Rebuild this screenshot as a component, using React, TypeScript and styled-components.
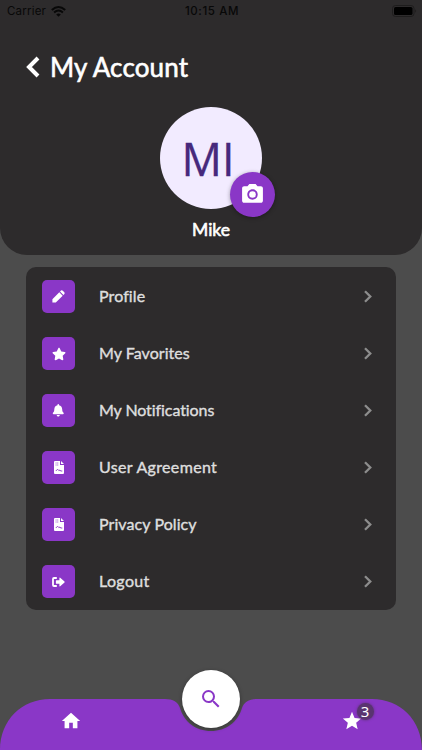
import React from "react";
import styled, { createGlobalStyle } from "styled-components";
import { FaStar, FaBell } from "react-icons/fa";
import { MdPhotoCamera, MdHome, MdStar, MdSearch } from "react-icons/md";

const PURPLE = "#8a37c7";
const DARK = "#2d2b2c";

const GlobalStyle = createGlobalStyle`
  * { box-sizing: border-box; }
  body { margin: 0; background: #4c4c4c; font-family: Lato, sans-serif; }
`;

const Screen = styled.div`
  width: 422px;
  height: 750px;
  display: flex;
  flex-direction: column;
  overflow: hidden;
  background: #4c4c4c;
`;

const Header = styled.header`
  height: 255px;
  flex: none;
  background: ${DARK};
  border-radius: 0 0 27px 27px;
  display: flex;
  flex-direction: column;
  align-items: center;
`;

const StatusBar = styled.div`
  width: 100%;
  height: 22px;
  padding: 0 5px 0 7px;
  display: grid;
  grid-template-columns: 1fr auto 1fr;
  align-items: center;
  font-family: Inter, sans-serif;
  font-size: 11.5px;
  color: #080808;
`;

const Carrier = styled.div`
  display: flex;
  align-items: center;
  gap: 5px;
  letter-spacing: 0.2px;
`;

const Clock = styled.div`
  font-weight: 500;
  font-size: 11.5px;
  letter-spacing: 0.6px;
`;

const BatterySlot = styled.div`
  display: flex;
  justify-content: flex-end;
`;

const TitleRow = styled.div`
  width: 100%;
  height: 85px;
  padding: 4px 0 0 26px;
  display: flex;
  align-items: center;
  gap: 10px;
`;

const Title = styled.h1`
  margin: 0;
  font-size: 26px;
  line-height: 32px;
  font-weight: 400;
  letter-spacing: 0.12px;
  color: #fff;
  -webkit-text-stroke: 0.6px #fff;
`;

const Avatar = styled.div`
  position: relative;
  width: 102px;
  height: 102px;
  flex: none;
  border-radius: 50%;
  background: #f2ebff;
  color: #46297c;
  display: flex;
  align-items: center;
  justify-content: center;
  padding: 1px 6px 0 0;
  font: 45px/50px "Open Sans", sans-serif;
  -webkit-text-stroke: 0.3px #46297c;
`;

const CameraButton = styled.button`
  position: absolute;
  left: 70px;
  top: 65px;
  width: 45px;
  height: 45px;
  padding: 0;
  border: 0;
  border-radius: 50%;
  background: ${PURPLE};
  color: #fff;
  display: flex;
  align-items: center;
  justify-content: center;
  box-shadow: 0 1px 4px rgba(0, 0, 0, 0.35);
`;

const UserName = styled.div`
  margin-top: 10px;
  font-size: 17.5px;
  line-height: 22px;
  font-weight: 400;
  color: #fff;
  -webkit-text-stroke: 0.6px #fff;
`;

const Menu = styled.nav`
  margin: 12px 26px 0;
  padding-top: 1px;
  height: 343px;
  flex: none;
  border-radius: 10px;
  background: ${DARK};
  display: flex;
  flex-direction: column;
`;

const MenuItem = styled.div`
  height: 57px;
  flex: none;
  padding: 0 24px 0 16px;
  display: flex;
  align-items: center;
`;

const IconTile = styled.div`
  width: 33px;
  height: 33px;
  border-radius: 5px;
  background: ${PURPLE};
  color: #fff;
  display: flex;
  align-items: center;
  justify-content: center;
`;

const Label = styled.div<{ $spacing: number }>`
  flex: 1;
  margin: -2px 0 0 24px;
  font-size: 16px;
  line-height: 20px;
  font-weight: 400;
  letter-spacing: ${(p) => p.$spacing}px;
  color: #dedede;
  -webkit-text-stroke: 0.4px #dedede;
`;

const Footer = styled.footer`
  position: relative;
  height: 80px;
  margin-top: auto;
  flex: none;
`;

const BarShape = styled.svg`
  position: absolute;
  inset: 0;
  display: block;
`;

const TabRow = styled.div`
  position: relative;
  height: 80px;
  display: grid;
  grid-template-columns: 141px 140px 141px;
  justify-items: center;
  color: #fff;
`;

const Tab = styled.div`
  position: relative;
  margin-top: 40px;
  height: 22px;
  display: flex;
`;

const SearchButton = styled.div`
  width: 58px;
  height: 58px;
  border-radius: 50%;
  background: #fff;
  color: ${PURPLE};
  display: flex;
  align-items: center;
  justify-content: center;
  box-shadow: 0 1px 4px rgba(0, 0, 0, 0.3);
`;

const Badge = styled.span`
  position: absolute;
  left: 16px;
  top: -7px;
  width: 17px;
  height: 17px;
  border-radius: 50%;
  background: #593470;
  box-shadow: 0 0 3px #593470;
  font: 15px/16px "Noto Sans", sans-serif;
  text-align: center;
`;

const Pencil = () => (
  <svg width="13" height="13" viewBox="0 0 13 13" fill="#fff">
    <path d="M0.4 12.6V9.2L7.3 2.3L10.7 5.7L3.8 12.6ZM8 1.6L9 .6Q10 0 10.8 .7L12.3 2.2Q13 3 12.4 4L11.4 5Z" />
  </svg>
);

const Document = () => (
  <svg width="10" height="13" viewBox="0 0 10 13">
    <path d="M1 0H6V4H10V12Q10 13 9 13H1Q0 13 0 12V1Q0 0 1 0ZM7 0L10 3H7Z" fill="#fff" />
    <path d="M1.5 2H4.3M1.5 4H4.3" stroke={PURPLE} strokeWidth=".7" strokeDasharray="1.2 .4" />
    <path d="M1.8 10L3.6 8.2L4.8 9.6L6 9L6.6 10H8.3" fill="none" stroke={PURPLE} strokeWidth=".9" />
  </svg>
);

const Exit = () => (
  <svg width="13" height="10" viewBox="0 0 13 10">
    <path d="M4.8 1H2Q1 1 1 2V8Q1 9 2 9H4.8" fill="none" stroke="#fff" strokeWidth="1.8" />
    <path d="M4.4 3.3H7.4V1Q7.5.2 8.2.7L12.5 4.6Q12.9 5 12.5 5.4L8.2 9.3Q7.5 9.8 7.4 9V6.7H4.4Q3.9 6.7 3.9 6.2V3.8Q3.9 3.3 4.4 3.3Z" fill="#fff" />
  </svg>
);

const Chevron = () => (
  <svg width="8" height="13" viewBox="0 0 8 13" fill="none" stroke="#8d8d8d" strokeWidth="2.3">
    <path d="M1 1.2L6.3 6.5L1 11.8" />
  </svg>
);

const items = [
  { label: "Profile", icon: <Pencil />, spacing: 0.1 },
  { label: "My Favorites", icon: <FaStar size={14} />, spacing: 0.05 },
  { label: "My Notifications", icon: <FaBell size={12.5} />, spacing: -0.08 },
  { label: "User Agreement", icon: <Document />, spacing: 0.33 },
  { label: "Privacy Policy", icon: <Document />, spacing: 0.08 },
  { label: "Logout", icon: <Exit />, spacing: 0.35 },
];

export default function App() {
  return (
    <Screen>
      <GlobalStyle />
      <Header>
        <StatusBar>
          <Carrier>
            Carrier
            <svg width="15" height="11" viewBox="0 0 15 11" fill="none" stroke="#080808" strokeWidth="2">
              <path d="M.8 4.1Q7.5-2 14.2 4.1M3.1 6.5Q7.5 2.5 11.9 6.5" />
              <path d="M5.2 8.4Q7.5 6.4 9.8 8.4L7.5 10.8Z" fill="#080808" stroke="none" />
            </svg>
          </Carrier>
          <Clock>10:15 AM</Clock>
          <BatterySlot>
            <svg width="25" height="12" viewBox="0 0 25 12">
              <rect x=".5" y=".5" width="21.5" height="11" rx="3" fill="none" stroke="#1e1d1d" />
              <rect x="2" y="2" width="18.5" height="8" rx="1.6" fill="#000" />
              <path d="M23.3 4Q25 6 23.3 8Z" fill="#1c1b1b" />
            </svg>
          </BatterySlot>
        </StatusBar>
        <TitleRow>
          <svg width="14" height="22" viewBox="0 0 14 22" fill="none" stroke="#fff" strokeWidth="4">
            <path d="M12 2L3 11L12 20" />
          </svg>
          <Title>My Account</Title>
        </TitleRow>
        <Avatar>
          MI
          <CameraButton aria-label="Change photo">
            <MdPhotoCamera size={25} />
          </CameraButton>
        </Avatar>
        <UserName>Mike</UserName>
      </Header>
      <Menu>
        {items.map((item) => (
          <MenuItem key={item.label}>
            <IconTile>{item.icon}</IconTile>
            <Label $spacing={item.spacing}>{item.label}</Label>
            <Chevron />
          </MenuItem>
        ))}
      </Menu>
      <Footer>
        <BarShape width="422" height="80" viewBox="0 0 422 80">
          <path
            d="M0 80C0 50 22 29 50 29H165C173 29 178 32 180 38C184 52 196 61 211 61C226 61 238 52 242 38C244 32 249 29 257 29H372C400 29 422 50 422 80Z"
            fill={PURPLE}
          />
        </BarShape>
        <TabRow>
          <Tab><MdHome size={22} /></Tab>
          <SearchButton><MdSearch size={24} /></SearchButton>
          <Tab>
            <MdStar size={22} />
            <Badge>3</Badge>
          </Tab>
        </TabRow>
      </Footer>
    </Screen>
  );
}
